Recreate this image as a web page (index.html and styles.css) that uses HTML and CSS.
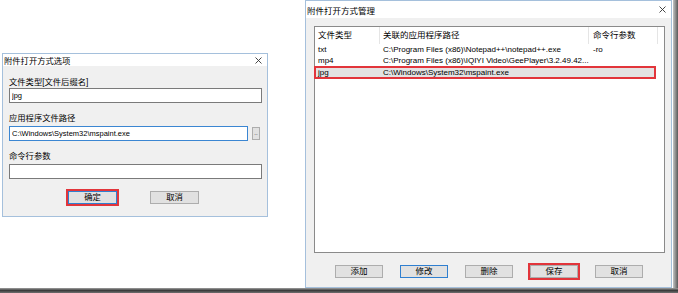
FILE: index.html
```html
<!DOCTYPE html>
<html lang="zh-CN">
<head>
    <meta charset="UTF-8">
    <meta name="viewport" content="width=device-width, initial-scale=1.0">
    <title>附件打开方式</title>
    <link rel="stylesheet" href="styles.css">
</head>
<body>
    <div class="desk">
        <div class="dialog options">
            <div class="titlebar">
                <span>附件打开方式选项</span>
                <svg class="close" width="7" height="7" viewBox="0 0 7 7"><path d="M0.5 0.5L6.5 6.5M6.5 0.5L0.5 6.5" stroke="#333" stroke-width="0.9" fill="none"/></svg>
            </div>
            <div class="body">
                <label for="ext">文件类型[文件后缀名]</label>
                <input class="field" id="ext" type="text" value="jpg">

                <label for="appPath">应用程序文件路径</label>
                <div class="path-row">
                    <input class="field" id="appPath" type="text" value="C:\Windows\System32\mspaint.exe">
                    <button class="browse" type="button">..</button>
                </div>

                <label for="args">命令行参数</label>
                <input class="field" id="args" type="text" value="">

                <div class="actions">
                    <button class="btn focused marked" type="button">确定</button>
                    <button class="btn" type="button">取消</button>
                </div>
            </div>
        </div>

        <div class="dialog manage">
            <div class="titlebar">
                <span>附件打开方式管理</span>
                <svg class="close" width="7" height="7" viewBox="0 0 7 7"><path d="M0.5 0.5L6.5 6.5M6.5 0.5L0.5 6.5" stroke="#333" stroke-width="0.9" fill="none"/></svg>
            </div>
            <div class="body">
                <div class="list">
                    <div class="row head">
                        <div>文件类型</div>
                        <div>关联的应用程序路径</div>
                        <div>命令行参数</div>
                    </div>
                    <div class="row">
                        <div>txt</div>
                        <div>C:\Program Files (x86)\Notepad++\notepad++.exe</div>
                        <div>-ro</div>
                    </div>
                    <div class="row">
                        <div>mp4</div>
                        <div>C:\Program Files (x86)\IQIYI Video\GeePlayer\3.2.49.42...</div>
                        <div></div>
                    </div>
                    <div class="row selected">
                        <div>jpg</div>
                        <div>C:\Windows\System32\mspaint.exe</div>
                        <div></div>
                    </div>
                </div>
                <div class="toolbar">
                    <button class="btn" type="button">添加</button>
                    <button class="btn focused" type="button">修改</button>
                    <button class="btn" type="button">删除</button>
                    <button class="btn marked" type="button">保存</button>
                    <button class="btn" type="button">取消</button>
                </div>
            </div>
        </div>

        <div class="shadow-right"></div>
    </div>
    <div class="shadow-bottom"></div>
</body>
</html>
```
FILE: styles.css
```css
* {
    box-sizing: border-box;
}

body {
    margin: 0;
    width: 678px;
    height: 293px;
    overflow: hidden;
    background-color: #fff;
    font-family: "Liberation Sans", "Noto Sans CJK SC", sans-serif;
    color: #000;
}

.desk {
    display: flex;
    align-items: flex-start;
    height: 288px;
    padding-left: 2px;
}

.dialog {
    display: flex;
    flex-direction: column;
    background-color: #f0f0f0;
    border: 1px solid #a5c0dc;
}

.titlebar {
    display: flex;
    align-items: center;
    justify-content: space-between;
    background-color: #fff;
    padding: 0 5px 0 1px;
}

.close {
    display: block;
}

button {
    font-family: inherit;
    color: #000;
    padding: 0;
    cursor: pointer;
}

.btn {
    width: 48px;
    height: 13px;
    line-height: 11px;
    background-color: #e1e1e1;
    border: 1px solid #adadad;
}

.btn.focused {
    border-color: #2f7fd0;
}

.btn.marked {
    outline: 2px solid #e2353b;
}

/* options dialog */

.options {
    width: 266px;
    height: 164px;
    margin-top: 53px;
    font-size: 8.3px;
}

.options .titlebar {
    height: 12px;
}

.options .body {
    display: flex;
    flex-direction: column;
    padding: 10px 5px 0 6px;
}

.options label {
    line-height: 12px;
    margin-top: 9px;
    margin-bottom: 2px;
}

.options label:first-child {
    margin-top: 0;
    margin-bottom: 0;
}

.field {
    width: 253px;
    height: 15px;
    margin: 0;
    padding: 0 2px;
    border: 1px solid #7a7a7a;
    background-color: #fff;
    font-family: inherit;
    font-size: 7.5px;
    color: #000;
}

.path-row {
    display: flex;
    align-items: flex-start;
    gap: 4px;
}

.path-row .field {
    width: 239px;
    border-color: #3b86d2;
}

.browse {
    width: 8px;
    height: 13px;
    margin-top: 1px;
    font-size: 6px;
    line-height: 9px;
    background-color: #e1e1e1;
    border: 1px solid #adadad;
}

.actions {
    display: flex;
    gap: 33px;
    margin-top: 12px;
    padding-left: 59px;
}

.actions .btn {
    width: 49px;
    font-size: 8.3px;
}

/* manage dialog */

.manage {
    width: 367px;
    height: 288px;
    margin-left: 37px;
    font-size: 8.5px;
}

.manage .titlebar {
    height: 17px;
}

.manage .body {
    display: flex;
    flex-direction: column;
    padding: 8px 6px 0 8px;
}

.list {
    height: 227px;
    background-color: #fff;
    border: 1px solid #8a8a8a;
}

.row {
    display: grid;
    grid-template-columns: 65px 209px 69px;
    height: 11.6px;
    line-height: 11.6px;
    font-size: 8px;
    white-space: nowrap;
}

.row > div {
    padding-left: 3px;
    overflow: hidden;
}

.row > div:last-child {
    padding-left: 4px;
}

.row.head {
    height: 17px;
    line-height: 17px;
    font-size: 8.5px;
    margin-bottom: -0.4px;
}

.row.head > div {
    border-right: 1px solid #e5e5e5;
}

.row.selected {
    width: 340px;
    background-color: #e3e3e3;
    outline: 2px solid #e2353b;
    outline-offset: -1px;
}

.toolbar {
    display: flex;
    gap: 17px;
    margin-top: 12px;
    padding-left: 21px;
}

.toolbar .btn {
    font-size: 8.5px;
}

/* picture frame shadow */

.shadow-right {
    width: 5px;
    height: 288px;
    margin-left: 1px;
    background: linear-gradient(to right, #c4c4c4, #5a5a5a);
}

.shadow-bottom {
    height: 5px;
    background: linear-gradient(#a0a0a0, #3c3c3c 50%, #707070);
}
```
